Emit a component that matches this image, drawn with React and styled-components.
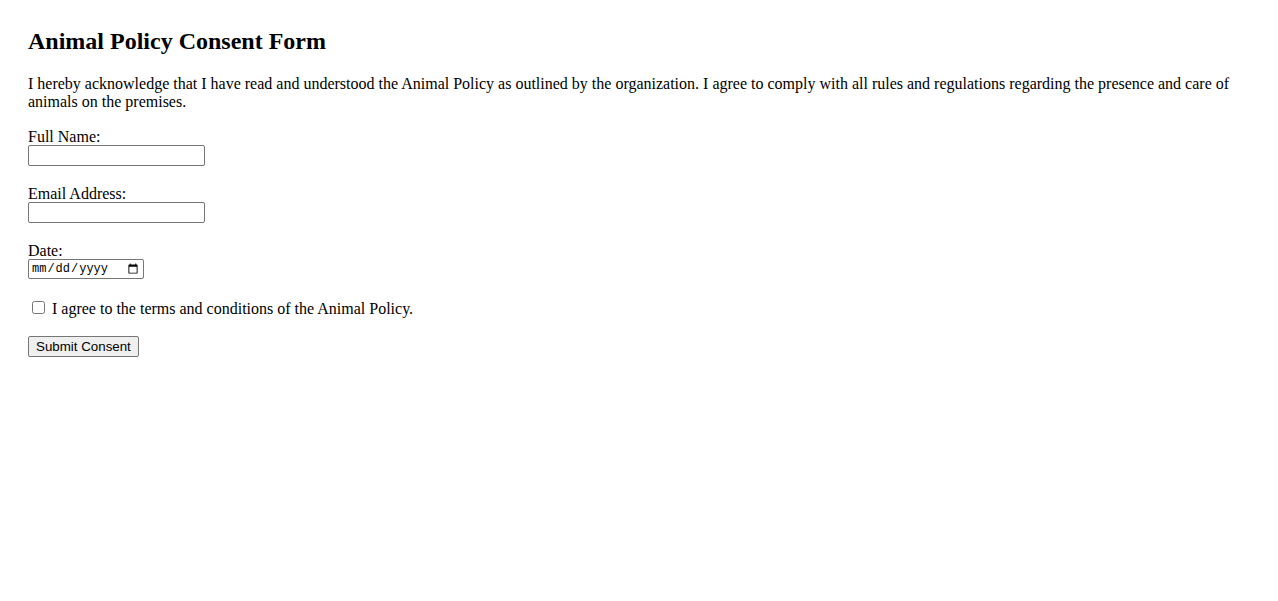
import React from "react";
import styled, { createGlobalStyle } from "styled-components";

const GlobalStyle = createGlobalStyle`
  html, body {
    margin: 0;
    padding: 0;
    background: #ffffff;
  }
  body {
    font-family: "Liberation Serif", "Times New Roman", serif;
    font-size: 16px;
    color: #000000;
  }
`;

const Page = styled.div`
  padding: 28px;
`;

const Title = styled.h2`
  margin: 0 0 19px;
  font-size: 24px;
  font-weight: bold;
  line-height: 27.6px;
`;

const Intro = styled.p`
  margin: 0 0 18px;
  line-height: 18.4px;
`;

const Form = styled.form`
  display: flex;
  flex-direction: column;
  align-items: flex-start;
`;

const Field = styled.div`
  display: flex;
  flex-direction: column;
  align-items: flex-start;
  margin-bottom: ${(p) => p.$gap || 19.8}px;
`;

const FieldLabel = styled.label`
  line-height: 16px;
`;

const CheckLabel = styled.label`
  line-height: 18.4px;
`;

const TextInput = styled.input`
  box-sizing: border-box;
  width: 177px;
  height: 21px;
  margin: 0;
  padding: 1px 2px;
  border: 1px solid #767676;
  border-radius: 2px;
  font-family: "Liberation Sans", Arial, sans-serif;
  font-size: 13.33px;
  background: #ffffff;
`;

const DateInput = styled.input`
  box-sizing: border-box;
  width: 116px;
  height: 20px;
  margin: 0;
  padding: 1px 2px;
  border: 1px solid #767676;
  border-radius: 2px;
  font-family: "Liberation Mono", monospace;
  font-size: 12px;
  background: #ffffff;
`;

const CheckRow = styled.div`
  display: flex;
  align-items: center;
  line-height: 18.4px;
  margin-bottom: 18px;
`;

const Check = styled.input`
  width: 13px;
  height: 13px;
  margin: 2px 7px 4px 4px;
`;

const Button = styled.button`
  box-sizing: border-box;
  height: 21px;
  margin: 0;
  padding: 1px 7px;
  border: 1px solid #767676;
  border-radius: 2px;
  background: #efefef;
  font-family: "Liberation Sans", Arial, sans-serif;
  font-size: 13.33px;
  color: #000000;
`;

export default function App() {
  return (
    <>
      <GlobalStyle />
      <Page>
        <Title>Animal Policy Consent Form</Title>
        <Intro>
          I hereby acknowledge that I have read and understood the Animal Policy as outlined by the
          organization. I agree to comply with all rules and regulations regarding the presence and
          care of animals on the premises.
        </Intro>
        <Form onSubmit={(e) => e.preventDefault()}>
          <Field>
            <FieldLabel htmlFor="fullName">Full Name:</FieldLabel>
            <TextInput id="fullName" type="text" />
          </Field>
          <Field>
            <FieldLabel htmlFor="email">Email Address:</FieldLabel>
            <TextInput id="email" type="email" />
          </Field>
          <Field $gap={20.4}>
            <FieldLabel htmlFor="date">Date:</FieldLabel>
            <DateInput id="date" type="date" />
          </Field>
          <CheckRow>
            <Check id="agree" type="checkbox" />
            <CheckLabel htmlFor="agree">I agree to the terms and conditions of the Animal Policy.</CheckLabel>
          </CheckRow>
          <Button type="submit">Submit Consent</Button>
        </Form>
      </Page>
    </>
  );
}
